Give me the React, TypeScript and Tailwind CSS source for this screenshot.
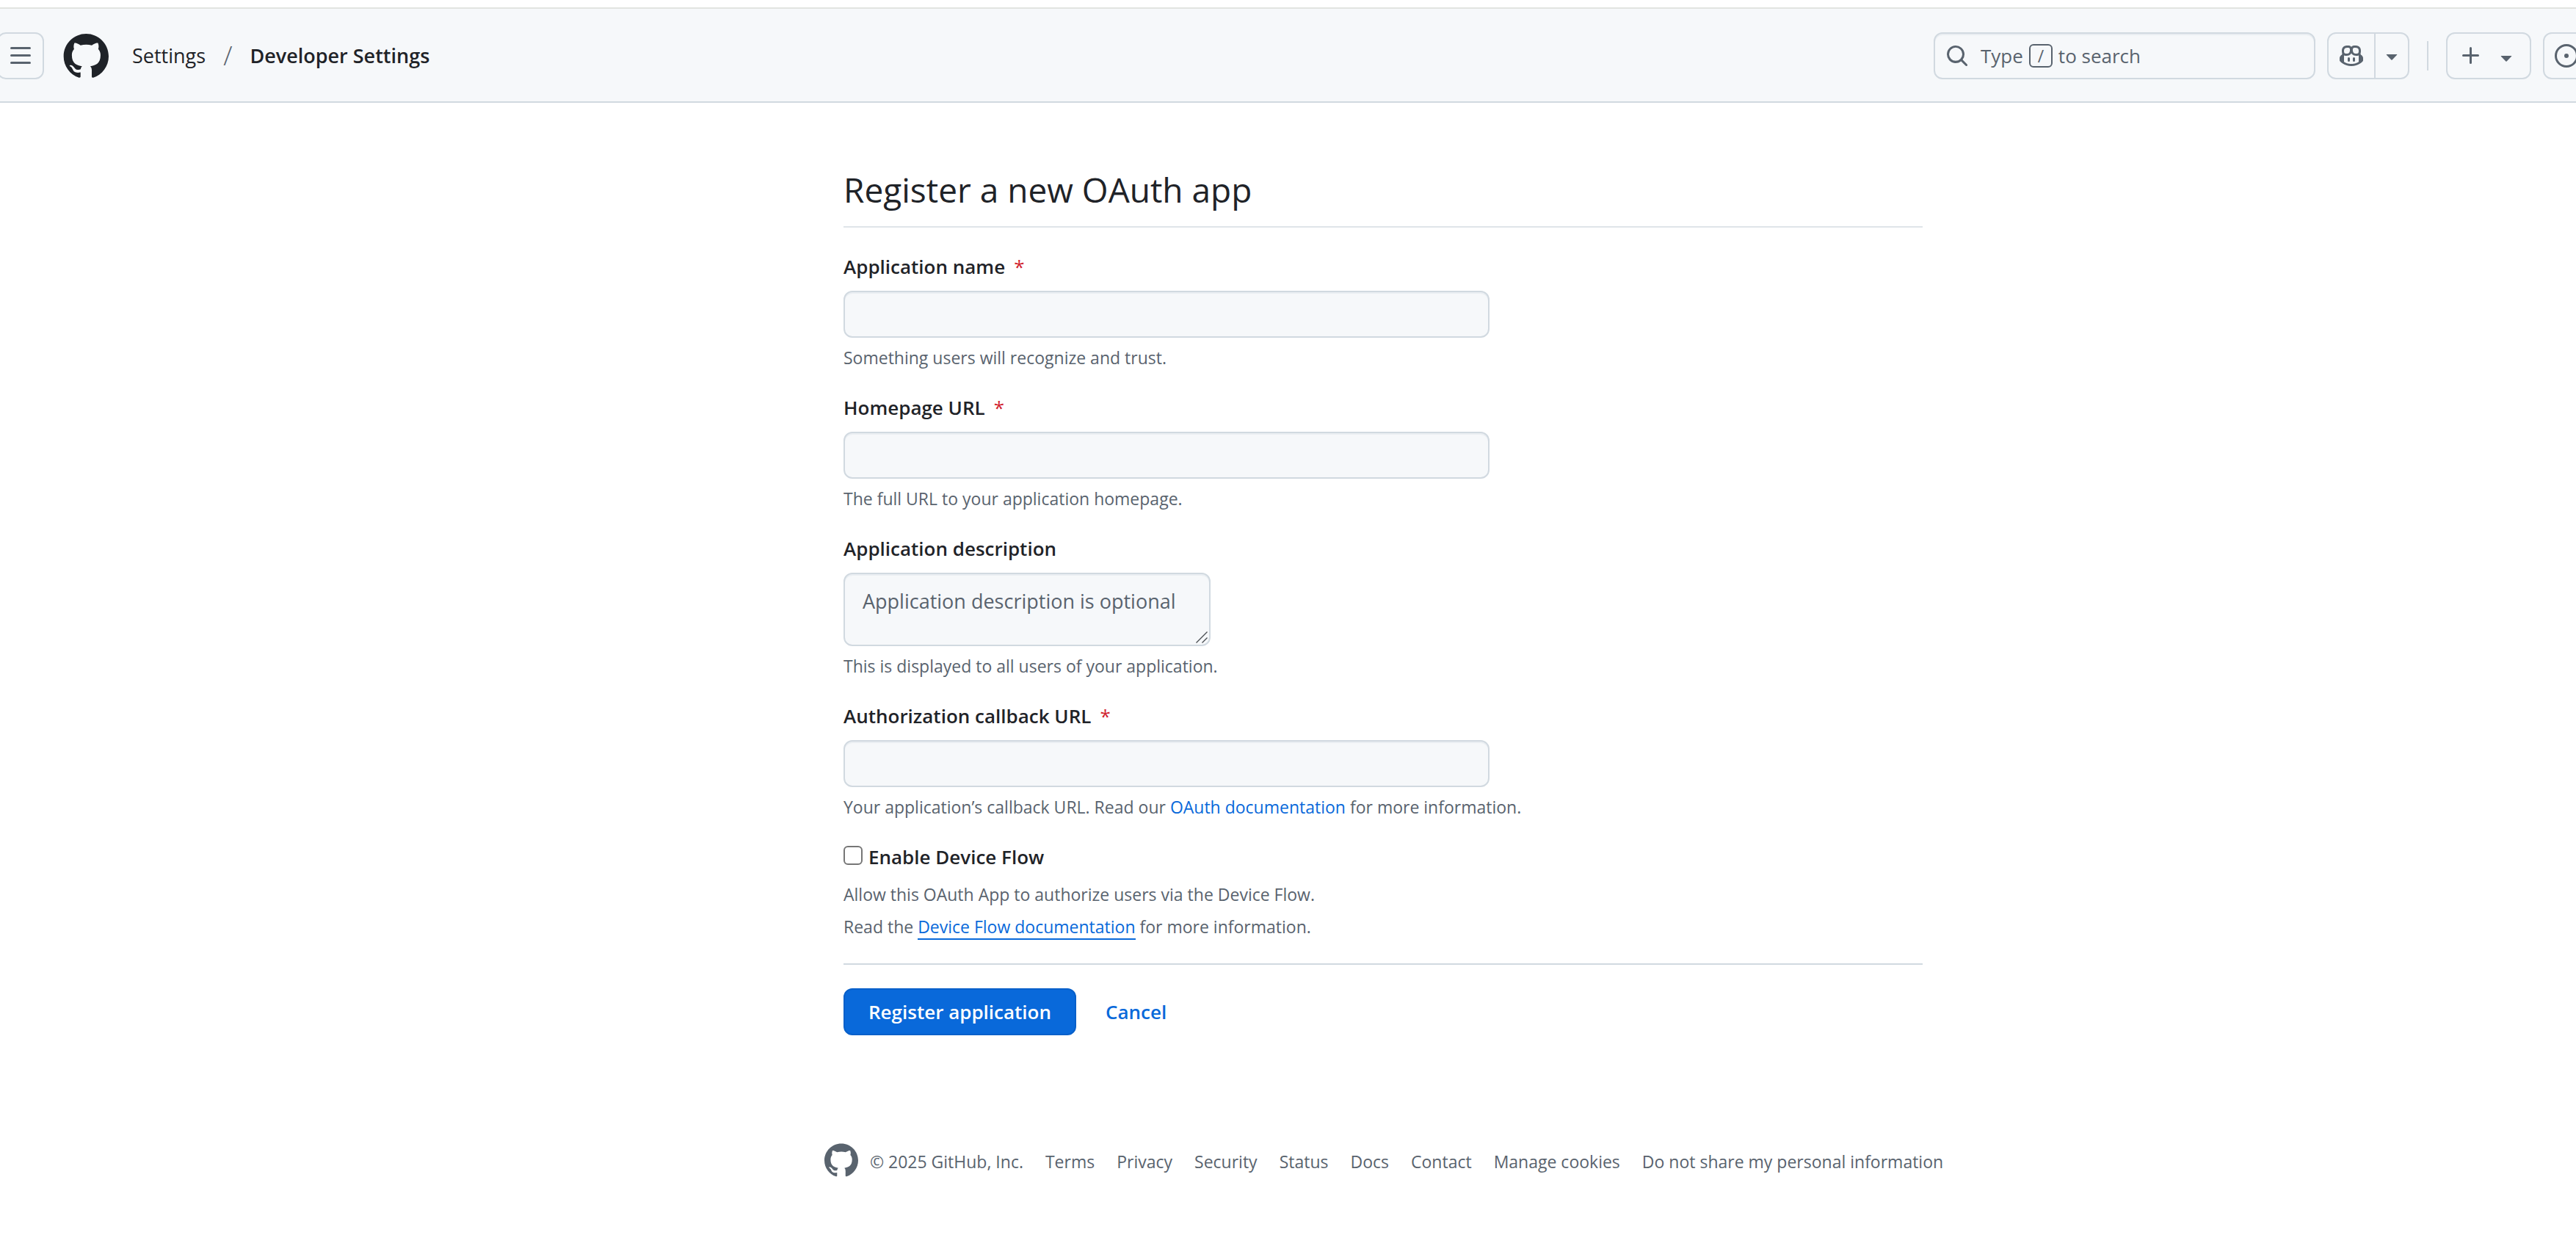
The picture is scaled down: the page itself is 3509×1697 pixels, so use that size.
import type { ReactNode } from "react";

const MARK =
  "M12.5.75C6.146.75 1 5.896 1 12.25c0 5.089 3.292 9.387 7.863 10.91.575.101.79-.244.79-.546 0-.273-.014-1.178-.014-2.142-2.889.532-3.636-.704-3.866-1.35-.13-.331-.69-1.352-1.18-1.625-.402-.216-.977-.748-.014-.762.906-.014 1.553.834 1.769 1.179 1.035 1.74 2.688 1.25 3.349.948.1-.747.402-1.25.733-1.538-2.559-.287-5.232-1.279-5.232-5.678 0-1.25.445-2.285 1.178-3.09-.115-.288-.517-1.467.115-3.048 0 0 .963-.302 3.163 1.179.92-.259 1.897-.388 2.875-.388.977 0 1.955.13 2.875.388 2.2-1.495 3.162-1.179 3.162-1.179.633 1.581.23 2.76.115 3.048.733.805 1.179 1.825 1.179 3.09 0 4.413-2.688 5.39-5.247 5.678.417.36.776 1.05.776 2.128 0 1.538-.014 2.774-.014 3.162 0 .302.216.662.79.547C20.709 21.637 24 17.324 24 12.25 24 5.896 18.854.75 12.5.75Z";

const ICONS = {
  bars: "M1 2.75A.75.75 0 0 1 1.75 2h12.5a.75.75 0 0 1 0 1.5H1.75A.75.75 0 0 1 1 2.75Zm0 5A.75.75 0 0 1 1.75 7h12.5a.75.75 0 0 1 0 1.5H1.75A.75.75 0 0 1 1 7.75ZM1.75 12h12.5a.75.75 0 0 1 0 1.5H1.75a.75.75 0 0 1 0-1.5Z",
  search:
    "M10.68 11.74a6 6 0 0 1-7.922-8.982 6 6 0 0 1 8.982 7.922l3.04 3.04a.749.749 0 0 1-.326 1.275.749.749 0 0 1-.734-.215ZM11.5 7a4.499 4.499 0 1 0-8.997 0A4.499 4.499 0 0 0 11.5 7Z",
  plus: "M7.75 2a.75.75 0 0 1 .75.75V7h4.25a.75.75 0 0 1 0 1.5H8.5v4.25a.75.75 0 0 1-1.5 0V8.5H2.75a.75.75 0 0 1 0-1.5H7V2.75A.75.75 0 0 1 7.75 2Z",
  triangle:
    "m4.427 7.427 3.396 3.396a.25.25 0 0 0 .354 0l3.396-3.396A.25.25 0 0 0 11.396 7H4.604a.25.25 0 0 0-.177.427Z",
  issue:
    "M8 9.5a1.5 1.5 0 1 0 0-3 1.5 1.5 0 0 0 0 3ZM8 0a8 8 0 1 1 0 16A8 8 0 0 1 8 0ZM1.5 8a6.5 6.5 0 1 0 13 0 6.5 6.5 0 0 0-13 0Z",
  copilot:
    "M7.998 15.035c-4.562 0-7.873-2.914-7.998-3.749V9.338c.085-.628.677-1.686 1.588-2.065.013-.07.024-.143.036-.218.029-.183.06-.384.126-.612-.201-.508-.254-1.084-.254-1.656 0-.87.128-1.769.693-2.484.579-.733 1.494-1.124 2.724-1.261 1.206-.134 2.262.034 2.944.765.05.053.096.108.139.165.044-.057.094-.112.143-.165.682-.731 1.738-.899 2.944-.765 1.23.137 2.145.528 2.724 1.261.566.715.693 1.614.693 2.484 0 .572-.053 1.148-.254 1.656.066.228.098.429.126.612.012.076.024.148.037.218.924.385 1.522 1.471 1.591 2.095v1.872c0 .766-3.351 3.795-8.002 3.795Zm0-1.485c2.28 0 4.584-1.11 5.002-1.433V7.862l-.023-.116c-.49.21-1.075.291-1.727.291-1.146 0-2.059-.327-2.71-.991A3.222 3.222 0 0 1 8 6.303a3.24 3.24 0 0 1-.544.743c-.65.664-1.563.991-2.71.991-.652 0-1.236-.081-1.727-.291l-.023.116v4.255c.419.323 2.722 1.433 5.002 1.433ZM6.762 2.83c-.193-.206-.637-.413-1.682-.297-1.019.113-1.479.404-1.713.7-.247.312-.369.789-.369 1.554 0 .793.129 1.171.308 1.371.162.181.519.379 1.442.379.853 0 1.339-.235 1.638-.54.315-.322.527-.827.617-1.553.117-.935-.037-1.395-.241-1.614Zm4.155-.297c-1.044-.116-1.488.091-1.681.297-.204.219-.359.679-.242 1.614.091.726.303 1.231.618 1.553.299.305.784.54 1.638.54.922 0 1.28-.198 1.442-.379.179-.2.308-.578.308-1.371 0-.765-.123-1.242-.37-1.554-.233-.296-.693-.587-1.713-.7ZM6.25 9.037a.75.75 0 0 1 .75.75v1.501a.75.75 0 0 1-1.5 0V9.787a.75.75 0 0 1 .75-.75Zm4.25.75v1.501a.75.75 0 0 1-1.5 0V9.787a.75.75 0 0 1 1.5 0Z",
};

function Icon({ name, className = "" }: { name: keyof typeof ICONS; className?: string }) {
  return (
    <svg viewBox="0 0 16 16" fill="currentColor" aria-hidden="true" className={`size-8 shrink-0 ${className}`}>
      <path d={ICONS[name]} />
    </svg>
  );
}

function Mark({ className }: { className: string }) {
  return (
    <svg viewBox="0 0 24 24" fill="currentColor" aria-hidden="true" className={className}>
      <path d={MARK} />
    </svg>
  );
}

function Header() {
  return (
    <header className="mt-2.5 flex h-[130px] items-center justify-between overflow-hidden border-y-2 border-t-[#e1e4e1] border-b-[#d1d9e0] bg-[#f6f8fa] pt-0.5">
      <div className="-ml-1 flex items-center">
        <button type="button" aria-label="Open menu" className="flex size-16 items-center justify-center rounded-xl border-2 border-[#d1d9e0] text-[#59636e]">
          <Icon name="bars" />
        </button>
        <a href="#" aria-label="Homepage" className="ml-6">
          <Mark className="size-16" />
        </a>
        <nav aria-label="Breadcrumb" className="ml-8 flex items-center">
          <a href="#" className="text-[27px]">Settings</a>
          <span className="mx-6 text-[36px] font-light text-[#59636e]">/</span>
          <a href="#" className="text-[27px] font-semibold">Developer Settings</a>
        </nav>
      </div>
      <div className="-mr-[19px] flex items-center text-[#59636e]">
        <button type="button" className="flex h-16 w-[520px] items-center rounded-xl border-2 border-[#d1d9e0] px-3.5 shadow-[inset_0_2px_0_#eaeef2]">
          <Icon name="search" />
          <span className="ml-4">Type</span>
          <kbd className="mx-2 flex size-8 items-center justify-center rounded-md border-2 border-[#59636e] font-['Open_Sans',sans-serif] text-[23px] leading-none">/</kbd>
          <span>to search</span>
        </button>
        <div className="ml-4 flex h-16 divide-x-2 divide-[#d1d9e0] rounded-xl border-2 border-[#d1d9e0]">
          <button type="button" aria-label="Chat with Copilot" className="flex w-16 items-center justify-center">
            <Icon name="copilot" />
          </button>
          <button type="button" aria-label="Open Copilot menu" className="flex w-11 items-center justify-center">
            <Icon name="triangle" />
          </button>
        </div>
        <div className="mx-6 h-10 w-0.5 bg-[#d1d9e0]" />
        <button type="button" aria-label="Create new" className="flex h-16 items-center gap-4 rounded-xl border-2 border-[#d1d9e0] px-4">
          <Icon name="plus" />
          <Icon name="triangle" className="mt-1" />
        </button>
        <button type="button" aria-label="Your issues" className="ml-4 flex size-16 items-center justify-center rounded-xl border-2 border-[#d1d9e0]">
          <Icon name="issue" />
        </button>
      </div>
    </header>
  );
}

function Field({ id, label, required, help, children }: { id: string; label: string; required?: boolean; help: ReactNode; children?: ReactNode }) {
  return (
    <div className="mb-7">
      <label htmlFor={id} className="mb-3 block font-semibold">
        {label}
        {required && <span className="ml-3 font-normal text-[#d1242f]">*</span>}
      </label>
      {children ?? (
        <input
          id={id}
          type="text"
          required={required}
          className="block h-16 w-full max-w-[880px] rounded-xl border-2 border-[#d1d9e0] bg-[#f6f8fa] px-6 shadow-[inset_0_2px_0_#eaeef2]"
        />
      )}
      <p className="mt-2 text-[23px] leading-[38px] text-[#59636e]">{help}</p>
    </div>
  );
}

const FOOTER_LINKS = ["Terms", "Privacy", "Security", "Status", "Docs", "Contact", "Manage cookies", "Do not share my personal information"];

export default function App() {
  return (
    <div className="flow-root min-h-screen overflow-hidden bg-white font-['Open_Sans',sans-serif] text-[26px] leading-[42px] text-[#1f2328]">
      <Header />
      <div className="pl-[259px]">
        <main className="mx-auto w-full max-w-[1470px] pt-[88px]">
          <h1 className="mb-8 border-b-2 border-[#dfe4e9] pb-5 text-[46px] leading-[60px]">Register a new OAuth app</h1>
          <form>
            <Field id="app-name" label="Application name" required help="Something users will recognize and trust." />
            <Field id="app-url" label="Homepage URL" required help="The full URL to your application homepage." />
            <Field id="app-description" label="Application description" help="This is displayed to all users of your application.">
              <div className="relative max-w-[500px]">
                <textarea
                  id="app-description"
                  placeholder="Application description is optional"
                  className="block h-[100px] w-full resize-none overflow-hidden rounded-xl border-2 border-[#d1d9e0] bg-[#f6f8fa] px-6 py-4 text-[27px] whitespace-nowrap shadow-[inset_0_2px_0_#eaeef2] placeholder:text-[#59636e]"
                />
                <svg viewBox="0 0 16 16" aria-hidden="true" className="pointer-events-none absolute right-1 bottom-1 size-4" stroke="#4b4f54" strokeWidth="1.4">
                  <path d="M0.5 15.5 15.5 0.5M8.5 15.5 15.5 8.5" />
                </svg>
              </div>
            </Field>
            <Field
              id="app-callback"
              label="Authorization callback URL"
              required
              help={
                <>
                  Your application’s callback URL. Read our <a href="#" className="text-[#0969da]">OAuth documentation</a> for more information.
                </>
              }
            />
            <div className="flex items-start gap-2">
              <input
                id="device-flow"
                type="checkbox"
                className="mt-1.5 size-[26px] appearance-none rounded-md border-2 border-[#767676] bg-white checked:border-[#0969da] checked:bg-[#0969da]"
              />
              <label htmlFor="device-flow" className="font-semibold">Enable Device Flow</label>
            </div>
            <p className="mt-2 text-[23px] leading-[44px] text-[#59636e]">
              Allow this OAuth App to authorize users via the Device Flow.
              <br />
              Read the <a href="#" className="border-b-2 border-[#0969da] text-[#0969da]">Device Flow documentation</a> for more information.
            </p>
            <div className="mt-7 flex items-center border-t-2 border-[#d1d9e0] pt-8 font-semibold">
              <button type="submit" className="h-16 rounded-xl border-2 border-[#0860ca] bg-[#0969da] px-8 text-white">Register application</button>
              <a href="#" className="ml-10 text-[#0969da]">Cancel</a>
            </div>
          </form>
        </main>
        <footer className="mt-[146px] flex items-end justify-center gap-4 pb-10 text-[23px] leading-[44px] text-[#59636e]">
          <a href="#" aria-label="Homepage">
            <Mark className="size-12" />
          </a>
          <ul className="flex gap-[30px]">
            <li>© 2025 GitHub, Inc.</li>
            {FOOTER_LINKS.map((text) => (
              <li key={text}>
                <a href="#">{text}</a>
              </li>
            ))}
          </ul>
        </footer>
      </div>
    </div>
  );
}
